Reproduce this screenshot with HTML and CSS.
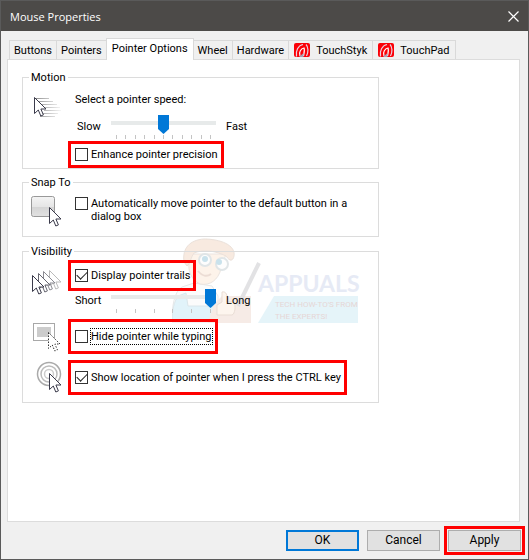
FILE: index.html
```html
<!DOCTYPE html>
<html lang="en">
<head>
    <meta charset="UTF-8">
    <meta name="viewport" content="width=device-width, initial-scale=1.0">
    <title>Mouse Properties</title>
    <link rel="stylesheet" href="styles.css">
</head>
<body>
    <!-- shapes used by several icons -->
    <svg class="defs" width="0" height="0" aria-hidden="true">
        <defs>
            <path id="arrow" d="M0.5 0.5V16.5L4.3 13L6.8 19L9.4 17.9L6.9 12H12Z"/>
            <linearGradient id="face" x1="0" y1="0" x2="0" y2="1">
                <stop offset="0" stop-color="#f4f4f4"/>
                <stop offset="0.5" stop-color="#e6e6e6"/>
                <stop offset="0.52" stop-color="#d4d4d4"/>
                <stop offset="1" stop-color="#e2e2e2"/>
            </linearGradient>
            <linearGradient id="speed" x1="0" y1="0" x2="1" y2="0">
                <stop offset="0" stop-color="#8c8c8c"/>
                <stop offset="1" stop-color="#999" stop-opacity="0.1"/>
            </linearGradient>
            <g id="touch">
                <rect width="16" height="14" rx="2" fill="#fb0007"/>
                <path d="M2.500 13.500C1.500 8 4 2.500 9 1.500M12 1.500C14.500 4 14.500 9 12.500 13" fill="none" stroke="#e6d3e2" stroke-width="1.200"/>
                <path d="M6 13C4.500 9 7 5.500 10 5C11 7 10 10 9.500 13" fill="none" stroke="#fff" stroke-width="1.200"/>
                <path d="M5 14L9.500 10V14Z" fill="#a9a0b5"/>
            </g>
        </defs>
    </svg>

    <div class="dialog">
        <header class="titlebar">
            <h1>Mouse Properties</h1>
            <button type="button" class="close" aria-label="Close">
                <svg width="11" height="11" viewBox="0 0 11 11"><path d="M0.5 0.5L10.5 10.5M10.5 0.5L0.5 10.5" stroke="#fff" stroke-width="1.2"/></svg>
            </button>
        </header>

        <nav class="tabs">
            <button type="button">Buttons</button>
            <button type="button">Pointers</button>
            <button type="button" class="active">Pointer Options</button>
            <button type="button">Wheel</button>
            <button type="button">Hardware</button>
            <button type="button" class="device"><svg width="16" height="14"><use href="#touch"/></svg>TouchStyk</button>
            <button type="button" class="device"><svg width="16" height="14"><use href="#touch"/></svg>TouchPad</button>
        </nav>

        <main class="panel">
            <svg class="watermark" width="190" height="90" viewBox="0 0 190 90" aria-hidden="true">
                <!-- shirt and laptop -->
                <path d="M0 86C0 70 2 56 10 51L22 47L40 50L46 60V86Z" fill="#fbfbfb" stroke="#e6e8e9"/>
                <path d="M0 86C0 74 2 66 6 60L14 57L16 70H46V84H0Z" fill="#e1f3fa" stroke="#dbe6ea"/>
                <path d="M36 86L42 68L50 60H79V87H36Z" fill="#f6ebe6"/>
                <!-- head -->
                <path d="M19 18C14 32 18 43 28 48C38 50 46 44 49 33L54 18Z" fill="#fdf3ea" stroke="#ebe4df"/>
                <path d="M12 26C10 12 18 4 32 3C48 3 64 9 62 20C61 25 58 26 54 20C44 15 32 13 22 17C19 21 18 28 15 30Z" fill="#f8eae0" stroke="#ebe1da"/>
                <ellipse cx="33" cy="24" rx="6" ry="6" fill="#fdfdfd" stroke="#e0e5e7" stroke-width="2"/>
                <ellipse cx="50" cy="28" rx="6" ry="6" fill="#fdfdfd" stroke="#e0e5e7" stroke-width="2"/>
                <circle cx="33" cy="23" r="3" fill="#c9e2ec"/>
                <circle cx="47" cy="26" r="3" fill="#c9e2ec"/>
                <path d="M26 35C30 40 35 41 39 38" fill="none" stroke="#ecddd5" stroke-width="2"/>
                <!-- thumbs up -->
                <path d="M45 79V69L50 66V56C54 55 56 59 55 66H62C64 70 63 78 60 79Z" fill="#fdf5ee" stroke="#e9ddd5"/>
                <path d="M87 27L66 70" stroke="#e2e2e4" stroke-width="4"/>
                <text class="brand" x="86" y="56">APPUALS</text>
                <path d="M102 60H186V87H86Z" fill="#e5f4f9"/>
                <text class="motto" x="103" y="71">TECH HOW-TO'S FROM</text>
                <text class="motto" x="103" y="83">THE EXPERTS!</text>
            </svg>

            <fieldset class="group">
                <legend>Motion</legend>
                <div class="row">
                    <svg class="icon" width="32" height="36" viewBox="0 0 32 36" aria-hidden="true">
                        <path d="M4 13H18V14H4ZM6 16H22V17H6ZM9 19H26V20H9ZM12 22H29V23H12ZM13 25H30V26H13ZM9 28H27V29H9ZM9 31H24V32H9Z" fill="url(#speed)"/>
                        <use href="#arrow" x="3" y="12" fill="#fff" stroke="#3a3a4a"/>
                    </svg>
                    <div class="controls">
                        <label class="caption" for="speed-range">Select a pointer speed:</label>
                        <div class="slider">
                            <span class="from indent">Slow</span>
                            <div class="scale">
                                <input type="range" id="speed-range" min="0" max="10" value="5">
                                <div class="ticks"><i></i><i></i><i></i><i></i><i></i><i></i><i></i><i></i><i></i><i></i><i></i></div>
                            </div>
                            <span class="to">Fast</span>
                        </div>
                        <label class="check marked low"><input type="checkbox"><span>Enhance pointer precision</span></label>
                    </div>
                </div>
            </fieldset>

            <fieldset class="group snap">
                <legend>Snap To</legend>
                <div class="row">
                    <svg class="icon" width="32" height="38" viewBox="0 0 32 38" aria-hidden="true">
                        <rect x="0.500" y="6.500" width="23" height="20" rx="2" fill="url(#face)" stroke="#999"/>
                        <use href="#arrow" x="18" y="17" fill="#fff" stroke="#3a3a4a"/>
                    </svg>
                    <div class="controls">
                        <label class="check plain"><input type="checkbox"><span>Automatically move pointer to the default button in a dialog box</span></label>
                    </div>
                </div>
            </fieldset>

            <fieldset class="group visibility">
                <legend>Visibility</legend>
                <div class="row">
                    <svg class="icon" width="34" height="40" viewBox="0 0 34 40" aria-hidden="true">
                        <g fill="#fff">
                            <use href="#arrow" x="18" y="11" stroke="#bbb"/>
                            <use href="#arrow" x="12" y="12" stroke="#8b8b92"/>
                            <use href="#arrow" x="7" y="14" stroke="#666670"/>
                            <use href="#arrow" x="1" y="16" stroke="#3a3a4a"/>
                        </g>
                    </svg>
                    <div class="controls">
                        <label class="check marked mid"><input type="checkbox" checked><span>Display pointer trails</span></label>
                        <div class="slider">
                            <label class="from" for="trail-range">Short</label>
                            <div class="scale">
                                <input type="range" id="trail-range" min="0" max="5" value="5">
                                <div class="ticks"><i></i><i></i><i></i><i></i><i></i><i></i></div>
                            </div>
                            <span class="to">Long</span>
                        </div>
                    </div>
                </div>
                <div class="row">
                    <svg class="icon" width="32" height="32" viewBox="0 0 32 32" aria-hidden="true">
                        <rect x="2.500" y="4.500" width="21" height="17" fill="#fff" stroke="#a8a8a8"/>
                        <rect x="6" y="8" width="14" height="10" fill="#ccc"/>
                        <use href="#arrow" x="17" y="13" fill="#fff" stroke="#333" stroke-dasharray="1.500 1.500"/>
                    </svg>
                    <div class="controls">
                        <label class="check marked high"><input type="checkbox"><span class="focused">Hide pointer while typing</span></label>
                    </div>
                </div>
                <div class="row">
                    <svg class="icon" width="32" height="34" viewBox="0 0 32 34" aria-hidden="true">
                        <g fill="none" stroke="#aaa" stroke-width="1.500">
                            <circle cx="18" cy="14" r="11.500"/>
                            <circle cx="18" cy="14" r="8" stroke="#bbb"/>
                            <circle cx="18" cy="14" r="4.500" stroke="#ccc"/>
                        </g>
                        <use href="#arrow" x="18" y="13" fill="#fff" stroke="#3a3a4a"/>
                    </svg>
                    <div class="controls">
                        <label class="check marked high"><input type="checkbox" checked><span>Show location of pointer when I press the CTRL key</span></label>
                    </div>
                </div>
            </fieldset>
        </main>

        <footer class="actions">
            <button type="button" class="default">OK</button>
            <button type="button">Cancel</button>
            <button type="button" class="highlight">Apply</button>
        </footer>
    </div>
</body>
</html>
```
FILE: styles.css
```css
* {
    box-sizing: border-box;
}

body {
    margin: 0;
    font-family: Roboto, "Liberation Sans", sans-serif;
    font-size: 11px;
    line-height: 15px;
    color: #000;
}

button {
    font: inherit;
    color: inherit;
}

.defs {
    position: absolute;
}

.dialog {
    display: flex;
    flex-direction: column;
    min-height: 100vh;
    background-color: #f0f0f0;
    border: 1px solid #5a5a5a;
}

/* title bar */
.titlebar {
    display: flex;
    justify-content: space-between;
    align-items: center;
    height: 30px;
    padding: 0 9px;
    background-color: #4c4a48;
}

.titlebar h1 {
    margin: 0;
    font-family: "Open Sans", "Noto Sans", sans-serif;
    font-size: 11px;
    font-weight: normal;
    color: #fff;
}

.close {
    display: flex;
    padding: 0;
    background: none;
    border: none;
}

/* tabs */
.tabs {
    display: flex;
    align-items: flex-end;
    padding: 7px 8px 0;
}

.tabs button {
    display: flex;
    align-items: center;
    gap: 6px;
    height: 19px;
    padding: 0 4px;
    background-color: #f0f0f0;
    border: 1px solid #d9d9d9;
    border-bottom: none;
    margin-right: -1px;
    white-space: nowrap;
}

.tabs .device {
    padding: 0 5px;
}

.tabs .active {
    position: relative;
    z-index: 1;
    height: 22px;
    margin-bottom: -1px;
    padding: 0 5px 2px;
    background-color: #fff;
}

/* page */
.panel {
    position: relative;
    flex: 1;
    margin: 0 8px 0 6px;
    padding: 10px 14px;
    background-color: #fff;
    border: 1px solid #dcdcdc;
}

.group {
    position: relative;
    max-width: 357px;
    margin: 0 0 6px;
    padding: 0;
    border: 1px solid #dcdcdc;
    min-width: 0;
}

.group legend {
    margin-left: 6px;
    padding: 0 2px;
}

/* icon column keeps one width whatever the drawing */
.row {
    display: grid;
    grid-template-columns: 45px 1fr;
    align-items: start;
}

.icon {
    margin-left: 8px;
    overflow: visible;
}

.controls {
    min-width: 0;
}

.caption {
    display: block;
    margin: 7px 0 8px 7px;
}

.slider {
    display: flex;
    height: 24px;
}

.slider .from {
    width: 43px;
    padding: 4px 0 0 7px;
}

.slider .indent {
    padding-left: 9px;
}

.slider .to {
    padding: 4px 0 0 10px;
}

.scale {
    width: 105px;
}

.scale input {
    display: block;
    width: 100%;
    height: 19px;
    margin: 0;
    appearance: none;
    -webkit-appearance: none;
    background: linear-gradient(#e7eaea, #e7eaea) 0 6px / 100% 4px no-repeat;
    border: none;
}

.scale input::-webkit-slider-thumb {
    -webkit-appearance: none;
    width: 11px;
    height: 19px;
    background-color: #0078d7;
    clip-path: polygon(0 0, 100% 0, 100% 74%, 50% 100%, 0 74%);
}

.ticks {
    display: flex;
    justify-content: space-between;
    margin: 1px 5px 0;
}

.ticks i {
    width: 1px;
    height: 4px;
    background-color: #c4c4c4;
}

/* tick boxes */
.check {
    display: flex;
    align-items: center;
    gap: 3px;
    width: fit-content;
}

.check input {
    flex: none;
    display: flex;
    align-items: center;
    justify-content: center;
    width: 13px;
    height: 13px;
    margin: 0;
    appearance: none;
    -webkit-appearance: none;
    background-color: #fff;
    border: 1px solid #333;
}

.check input:checked::before {
    content: '';
    width: 9px;
    height: 5px;
    margin-top: -3px;
    border-left: 1px solid #222;
    border-bottom: 1px solid #222;
    transform: rotate(-45deg);
}

.plain {
    align-items: flex-start;
    max-width: 290px;
    margin: 7px 0 0 7px;
    line-height: 13px;
}

.marked {
    border: 3px solid #f00;
    padding: 0 3px 0 4px;
}

.low {
    height: 27px;
    margin-top: 2px;
}

.mid {
    height: 31px;
    margin: 1px 0 -2px;
}

.high {
    height: 35px;
    margin-top: 6px;
}

.focused {
    outline: 1px dotted #000;
}

.snap {
    min-height: 62px;
    margin-bottom: 7px;
}

.visibility {
    padding-bottom: 7px;
}

.visibility .row + .row .icon {
    margin-top: 6px;
}

/* faint logo behind the options */
.watermark {
    position: absolute;
    left: 164px;
    top: 176px;
}

.brand {
    font-family: Lato, sans-serif;
    font-size: 23px;
    font-weight: bold;
    fill: #e6eaf5;
}

.motto {
    font-family: Roboto, sans-serif;
    font-size: 8px;
    fill: #e6d6d6;
}

/* dialog buttons */
.actions {
    display: flex;
    justify-content: flex-end;
    gap: 8px;
    padding: 8px 7px;
}

.actions button {
    width: 73px;
    height: 21px;
    padding: 0;
    background-color: #e1e1e1;
    border: 1px solid #adadad;
    font-size: 12px;
}

.actions .default {
    border: 2px solid #0078d7;
}

.actions .highlight {
    outline: 3px solid #f00;
    outline-offset: 1px;
}
```
